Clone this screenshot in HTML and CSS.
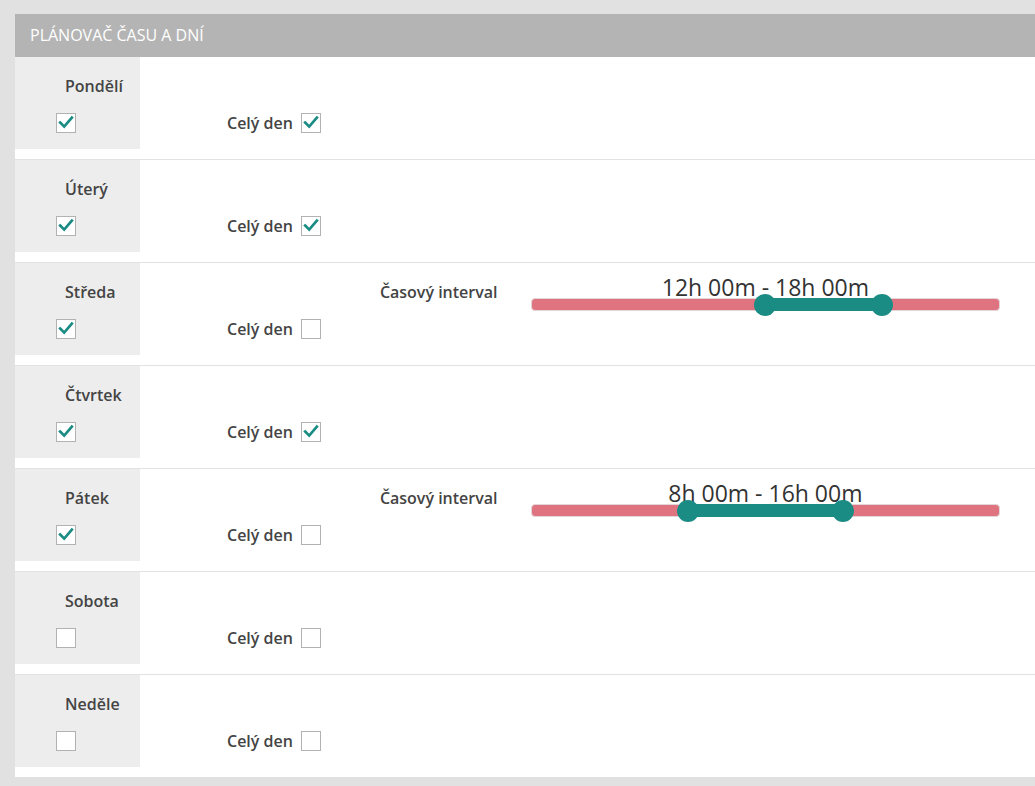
FILE: index.html
```html
<!DOCTYPE html>
<html lang="cs">
<head>
<meta charset="utf-8">
<title>Plánovač času a dní</title>
<link rel="stylesheet" href="styles.css">
</head>
<body>
<div class="panel">
  <div class="panel-head">PLÁNOVAČ ČASU A DNÍ</div>

  <div class="row">
    <div class="day"><div class="day-name">Pondělí</div><span class="cb checked"><svg viewBox="0 0 20 20"><polyline points="3.5,9.5 8,14 16.5,4"/></svg></span></div>
    <div class="content">
      <div class="allday"><span class="allday-label">Celý den</span><span class="cb checked"><svg viewBox="0 0 20 20"><polyline points="3.5,9.5 8,14 16.5,4"/></svg></span></div>
    </div>
  </div>

  <div class="row">
    <div class="day"><div class="day-name">Úterý</div><span class="cb checked"><svg viewBox="0 0 20 20"><polyline points="3.5,9.5 8,14 16.5,4"/></svg></span></div>
    <div class="content">
      <div class="allday"><span class="allday-label">Celý den</span><span class="cb checked"><svg viewBox="0 0 20 20"><polyline points="3.5,9.5 8,14 16.5,4"/></svg></span></div>
    </div>
  </div>

  <div class="row">
    <div class="day"><div class="day-name">Středa</div><span class="cb checked"><svg viewBox="0 0 20 20"><polyline points="3.5,9.5 8,14 16.5,4"/></svg></span></div>
    <div class="content">
      <div class="allday"><span class="allday-label">Celý den</span><span class="cb"></span></div>
      <div class="interval">
        <span class="interval-label">Časový interval</span>
        <div class="slider">
          <div class="slider-value">12h 00m - 18h 00m</div>
          <div class="track">
            <div class="range" style="left:50%;width:25%"></div>
            <span class="handle" style="left:50%"></span>
            <span class="handle" style="left:75%"></span>
          </div>
        </div>
      </div>
    </div>
  </div>

  <div class="row">
    <div class="day"><div class="day-name">Čtvrtek</div><span class="cb checked"><svg viewBox="0 0 20 20"><polyline points="3.5,9.5 8,14 16.5,4"/></svg></span></div>
    <div class="content">
      <div class="allday"><span class="allday-label">Celý den</span><span class="cb checked"><svg viewBox="0 0 20 20"><polyline points="3.5,9.5 8,14 16.5,4"/></svg></span></div>
    </div>
  </div>

  <div class="row">
    <div class="day"><div class="day-name">Pátek</div><span class="cb checked"><svg viewBox="0 0 20 20"><polyline points="3.5,9.5 8,14 16.5,4"/></svg></span></div>
    <div class="content">
      <div class="allday"><span class="allday-label">Celý den</span><span class="cb"></span></div>
      <div class="interval">
        <span class="interval-label">Časový interval</span>
        <div class="slider">
          <div class="slider-value">8h 00m - 16h 00m</div>
          <div class="track">
            <div class="range" style="left:33.333%;width:33.333%"></div>
            <span class="handle" style="left:33.333%"></span>
            <span class="handle" style="left:66.667%"></span>
          </div>
        </div>
      </div>
    </div>
  </div>

  <div class="row">
    <div class="day"><div class="day-name">Sobota</div><span class="cb"></span></div>
    <div class="content">
      <div class="allday"><span class="allday-label">Celý den</span><span class="cb"></span></div>
    </div>
  </div>

  <div class="row">
    <div class="day"><div class="day-name">Neděle</div><span class="cb"></span></div>
    <div class="content">
      <div class="allday"><span class="allday-label">Celý den</span><span class="cb"></span></div>
    </div>
  </div>
</div>
</body>
</html>
```

FILE: styles.css
```css
html, body {
  margin: 0;
  padding: 0;
  background: #e1e1e1;
  overflow: hidden;
}
body {
  font-family: "Open Sans", "Liberation Sans", sans-serif;
  color: #444;
  padding: 14px 0 0 15px;
  height: 786px;
  box-sizing: border-box;
}
.panel {
  background: #fff;
  width: 1040px;
}
.panel-head {
  background: #b4b4b4;
  color: #fff;
  font-size: 16px;
  height: 43px;
  line-height: 43px;
  padding-left: 15px;
}
.row {
  display: flex;
  border-bottom: 1px solid #e2e2e2;
  padding-bottom: 10px;
}
.row:last-child {
  border-bottom: none;
}
.day {
  width: 125px;
  height: 92px;
  background: #ededed;
  box-sizing: border-box;
  padding-top: 18px;
  flex-shrink: 0;
}
.day-name {
  font-size: 16px;
  font-weight: 600;
  line-height: 22px;
  padding-left: 50px;
  margin-bottom: 16px;
}
.day .cb {
  margin-left: 41px;
}
.cb {
  display: block;
  width: 20px;
  height: 20px;
  box-sizing: border-box;
  border: 1px solid #b2b2b2;
  background: #fff;
}
.cb svg {
  display: block;
  width: 18px;
  height: 18px;
}
.cb polyline {
  fill: none;
  stroke: #1a8c84;
  stroke-width: 3;
  stroke-linecap: square;
}
.content {
  display: flex;
  align-items: flex-start;
  padding-left: 87px;
}
.allday {
  display: flex;
  align-items: center;
  gap: 8px;
  margin-top: 56px;
}
.allday-label {
  font-size: 16px;
  font-weight: 600;
  line-height: 20px;
}
.interval {
  display: flex;
  align-items: flex-start;
  margin-left: 59px;
  margin-top: 18px;
}
.interval-label {
  font-size: 16px;
  font-weight: 600;
  line-height: 22px;
  width: 151px;
}
.slider {
  position: relative;
  width: 469px;
  margin-top: 17px;
}
.slider-value {
  position: absolute;
  left: 0;
  right: 0;
  bottom: 10px;
  text-align: center;
  font-size: 23px;
  line-height: 28px;
  color: #333;
  white-space: nowrap;
}
.track {
  position: relative;
  height: 13px;
  background: #df7480;
  border: 1px solid #e4d6d8;
  border-radius: 4px;
  box-sizing: border-box;
}
.range {
  position: absolute;
  top: -1px;
  bottom: -1px;
  background: #1a8c84;
}
.handle {
  position: absolute;
  top: 50%;
  width: 22px;
  height: 22px;
  margin: -11px 0 0 -11px;
  border-radius: 50%;
  background: #1a8c84;
}
```
